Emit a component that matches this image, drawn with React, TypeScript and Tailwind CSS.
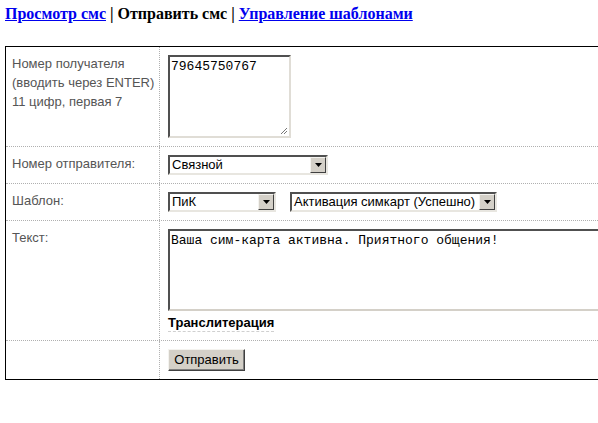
import React from "react";

function Select({ value, width }: { value: string; width: string }) {
  return (
    <div
      className={`flex h-[20px] ${width} border-2 border-t-[#505050] border-l-[#505050] border-r-[#e8e6e0] border-b-[#e8e6e0] bg-white`}
    >
      <div className="flex-1 overflow-hidden whitespace-nowrap pl-[2px] text-[13px] leading-[16px] text-black">
        {value}
      </div>
      <div className="flex w-[16px] items-center justify-center border border-t-[#f4f3ef] border-l-[#f4f3ef] border-r-[#404040] border-b-[#404040] bg-[#d4d0c8]">
        <svg width="7" height="4" viewBox="0 0 7 4">
          <path d="M0 0h7L3.5 4z" fill="#000" />
        </svg>
      </div>
    </div>
  );
}

function Row({
  label,
  children,
  last,
}: {
  label: React.ReactNode;
  children: React.ReactNode;
  last?: boolean;
}) {
  return (
    <div
      className={`flex ${last ? "" : "border-b border-dotted border-[#b0b0b0]"}`}
    >
      <div className="w-[154px] shrink-0 whitespace-nowrap border-r border-dotted border-[#b0b0b0] py-[7px] pl-[6px] text-[13px] leading-[19px] text-[#555]">
        {label}
      </div>
      <div className="flex flex-1 flex-col items-start px-[8px] py-[8px]">
        {children}
      </div>
    </div>
  );
}

export default function App() {
  return (
    <div
      className="h-[423px] w-[598px] overflow-hidden bg-white"
      style={{ fontFamily: '"Liberation Sans", Arial, sans-serif' }}
    >
      <div
        className="px-[5px] pt-[4px] text-[16px] font-bold leading-[20px]"
        style={{ fontFamily: '"Liberation Serif", "Times New Roman", serif' }}
      >
        <a href="#" className="text-[#0000ee] underline">
          Просмотр смс
        </a>{" "}
        <span className="text-black">|</span>{" "}
        <span className="text-black">Отправить смс</span>{" "}
        <span className="text-black">|</span>{" "}
        <a href="#" className="text-[#0000ee] underline">
          Управление шаблонами
        </a>
      </div>

      <div className="ml-[5px] mt-[22px] w-[640px] border border-black">
        <Row
          label={
            <>
              Номер получателя
              <br />
              (вводить через ENTER)
              <br />
              11 цифр, первая 7
            </>
          }
        >
          <div className="relative h-[83px] w-[123px] border-2 border-t-[#505050] border-l-[#505050] border-r-[#e0ddd6] border-b-[#e0ddd6] bg-white px-[1px] py-[2px] font-['Liberation_Mono',monospace] text-[13px] leading-[15px] text-black">
            79645750767
            <svg
              className="absolute bottom-[1px] right-[1px]"
              width="9"
              height="9"
              viewBox="0 0 9 9"
            >
              <path d="M8 2L2 8M8 5L5 8" stroke="#777" strokeWidth="1" />
            </svg>
          </div>
        </Row>
        <Row label="Номер отправителя:">
          <Select value="Связной" width="w-[160px]" />
        </Row>
        <Row label="Шаблон:">
          <div className="flex gap-[14px]">
            <Select value="ПиК" width="w-[108px]" />
            <Select value="Активация симкарт (Успешно)" width="w-[207px]" />
          </div>
        </Row>
        <Row label="Текст:">
          <div className="h-[82px] w-[470px] border-2 border-t-[#505050] border-l-[#505050] border-r-[#e0ddd6] border-b-[#d4d0c8] bg-white px-[1px] py-[2px] font-['Liberation_Mono',monospace] text-[13px] leading-[15px] text-black">
            Ваша сим-карта активна. Приятного общения!
          </div>
          <div className="mt-[4px] border-b border-dashed border-[#d0d0d0] text-[13px] font-bold leading-[16px] text-black">
            Транслитерация
          </div>
        </Row>
        <Row label="" last>
          <button className="h-[22px] w-[77px] border border-t-[#f4f3ef] border-l-[#f4f3ef] border-r-[#404040] border-b-[#404040] bg-[#d4d0c8] text-[13px] leading-[18px] text-black shadow-[inset_-1px_-1px_0_#808080]">
            Отправить
          </button>
        </Row>
      </div>
    </div>
  );
}
